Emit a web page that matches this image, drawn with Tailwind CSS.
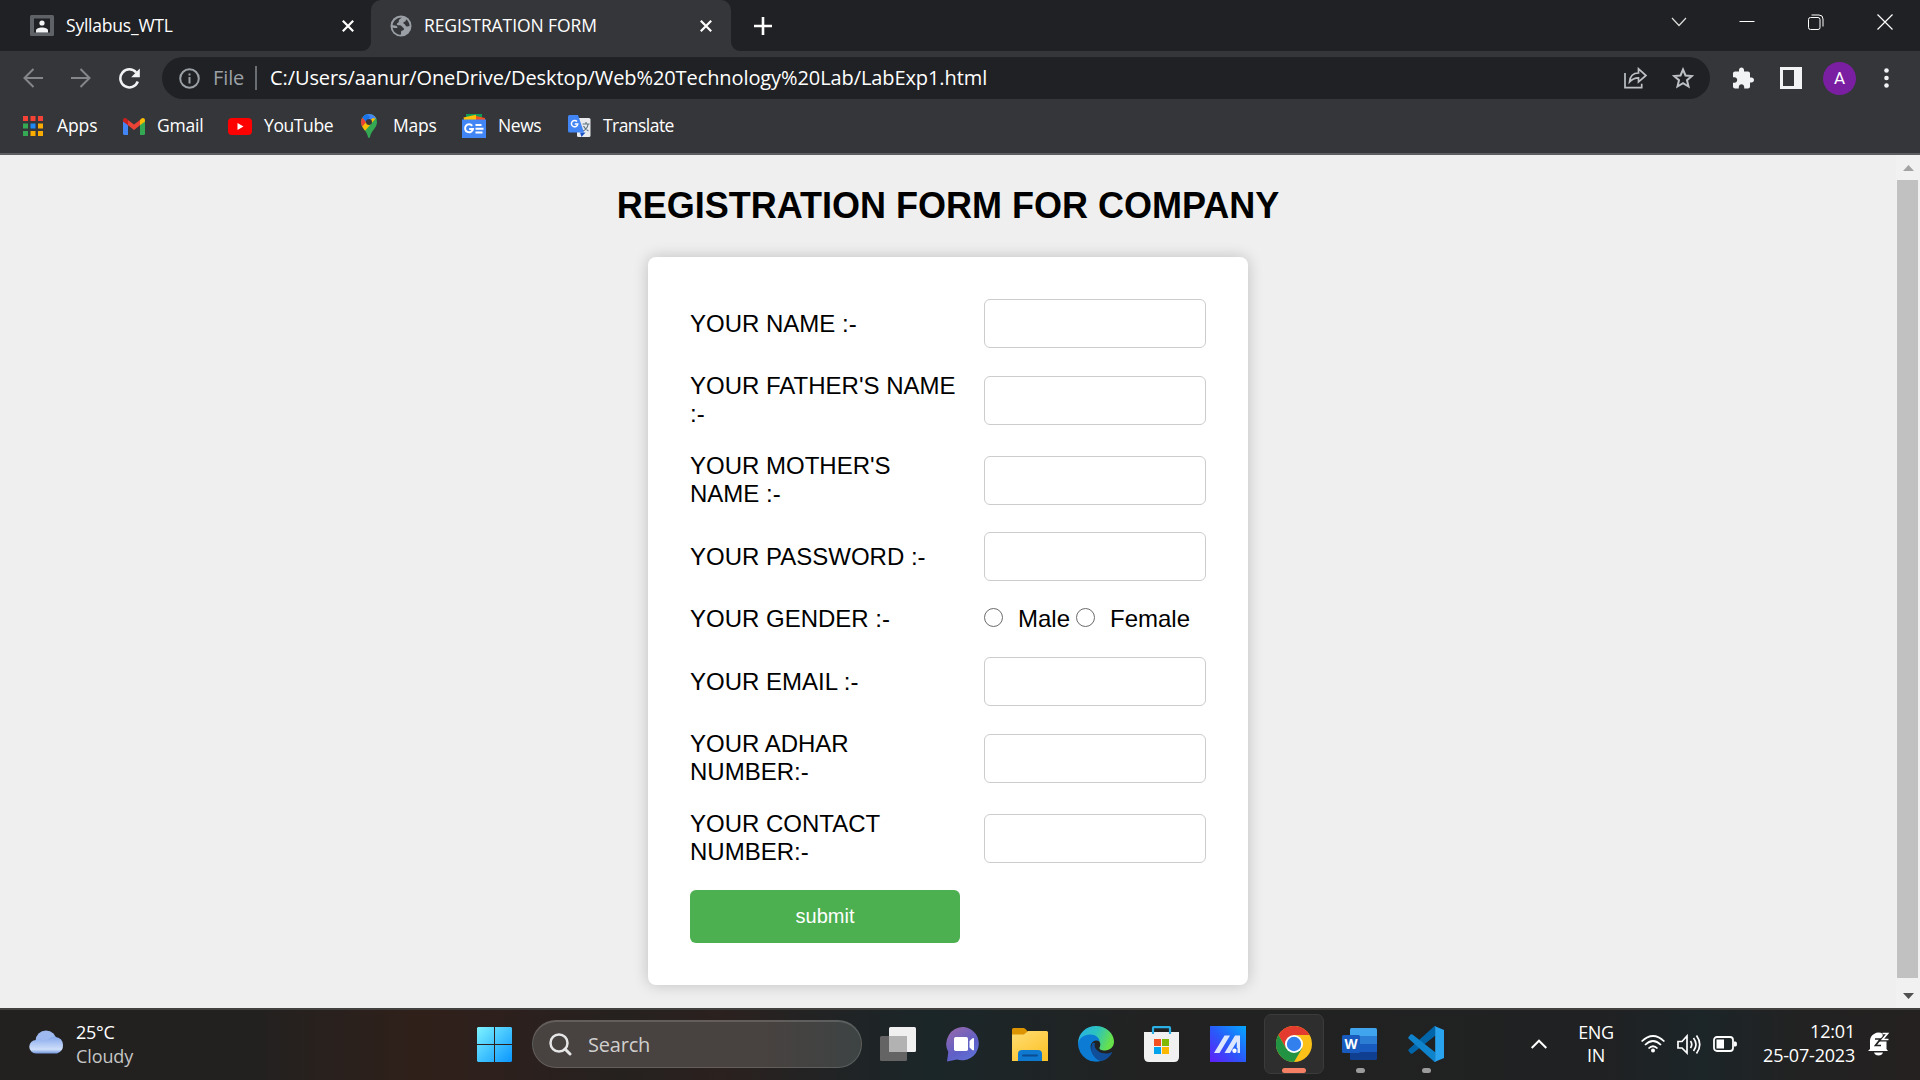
<!DOCTYPE html>
<html lang="en">
<head>
<meta charset="utf-8">
<title>REGISTRATION FORM</title>
<script src="https://cdn.jsdelivr.net/npm/@tailwindcss/browser@4"></script>
</head>
<body class="flex h-[1080px] w-[1920px] flex-col overflow-hidden bg-[#efefef] font-['Open_Sans',sans-serif] text-white">

<!-- Tab strip -->
<header class="flex h-[51px] shrink-0 bg-[#202124]">
  <div class="flex w-[371px] items-center bg-[#35363a]">
    <div class="flex h-full w-full items-center rounded-br-[9px] bg-[#202124] pl-[30px]">
      <svg class="h-[21px] w-6 shrink-0" viewBox="0 0 24 21"><rect width="24" height="21" rx="1.5" fill="#5f6368"/><rect x="4" y="3.5" width="16" height="14" fill="#202124"/><circle cx="12" cy="8" r="2.6" fill="#f1f3f4"/><path d="M6 17.5v-2c0-4 12-4 12 0v2z" fill="#f1f3f4"/></svg>
      <span class="mb-0.5 ml-3 w-[276px] text-[17.5px] leading-6 tracking-[-0.22px]">Syllabus_WTL</span>
      <svg class="h-3 w-3 shrink-0" viewBox="0 0 12 12" stroke="#fff" stroke-width="2.2"><path d="M.8.8l10.4 10.4M11.2.8L.8 11.2"/></svg>
    </div>
  </div>
  <div class="bg-[#202124]">
    <div class="flex h-full w-[360px] items-center rounded-t-[10px] bg-[#35363a] pl-[19px]">
      <svg class="h-[22px] w-[22px] shrink-0" viewBox="0 0 22 22"><circle cx="11" cy="11" r="10.5" fill="#9aa0a6"/><path d="M12 2.500C10 4 8.500 4.500 8.800 6.500c.2 1.500-1.800 1-2 2.500C6.500 11 11 9.500 12 11.500c.6 1.500 2 1 2 2.500s-3 1.500-3 3 .5 2.500-1 2.800C5.500 19 3 16 2.600 12.500c1.500.5 3 .8 4.400.5 1-.3.500-2-1-2.300-1.300-.3-2.800 0-3.400-.7C3 6 7 2.500 12 2.500zM16 4.200c2.300 1.600 3.600 4 3.600 6.800-1.300 0-2 .8-3.300.3-1.200-.5-.6-1.800-2-2.300-1.300-.5-1.300-2 .2-2.300 1-.2 1.500-1.200 1.500-2.500z" fill="#35363a"/></svg>
      <span class="mb-0.5 ml-3 w-[276px] text-[17.5px] leading-6 tracking-[-0.08px]">REGISTRATION FORM</span>
      <svg class="h-3 w-3 shrink-0" viewBox="0 0 12 12" stroke="#fff" stroke-width="2.2"><path d="M.8.8l10.4 10.4M11.2.8L.8 11.2"/></svg>
    </div>
  </div>
  <div class="flex flex-1 bg-[#35363a]">
    <div class="flex flex-1 items-center rounded-bl-[9px] bg-[#202124] pl-[23px]">
      <svg class="h-[18px] w-[18px]" viewBox="0 0 18 18" stroke="#fff" stroke-width="2.6"><path d="M9 0v18M0 9h18"/></svg>
      <svg class="mb-2 ml-[899px] h-4 w-4" viewBox="0 0 16 16" fill="none" stroke="#ddd" stroke-width="1.2"><path d="M1 4l7 7.500L15 4"/></svg>
      <svg class="mb-2 ml-[52px] h-4 w-4" viewBox="0 0 16 16" stroke="#fff"><path d="M.5 7.500h15"/></svg>
      <svg class="mb-2 ml-[53px] h-4 w-4" viewBox="0 0 16 16" fill="none" stroke="#fff"><rect x=".5" y="3.500" width="11.500" height="12" rx="2"/><path d="M3.500 1H11q4 0 4 4v7.500"/></svg>
      <svg class="mb-2 ml-[53px] h-4 w-4" viewBox="0 0 16 16" stroke="#fff" stroke-width="1.200"><path d="M.5.5l15 15M15.500.5l-15 15"/></svg>
    </div>
  </div>
</header>

<!-- Toolbar -->
<nav class="flex h-[54px] shrink-0 items-center bg-[#35363a] pl-[23px]">
  <svg class="h-5 w-5" viewBox="0 0 20 20" fill="none" stroke="#85868a" stroke-width="2"><path d="M20 10H1.500M10.500 1L1.500 10l9 9"/></svg>
  <svg class="ml-7 h-5 w-5" viewBox="0 0 20 20" fill="none" stroke="#85868a" stroke-width="2"><path d="M0 10h18.500M9.500 1l9 9-9 9"/></svg>
  <svg class="ml-7 h-[21px] w-[21px]" viewBox="0 0 21 21"><path d="M17.200 4.500A9 9 0 1 0 18.800 13.500" fill="none" stroke="#f1f3f4" stroke-width="2.500"/><path d="M20.800.6v8.600h-8.600z" fill="#f1f3f4"/></svg>
  <div class="ml-[22px] flex h-[42px] w-[1548px] items-center rounded-full bg-[#202124] pl-[17px]">
    <svg class="h-[21px] w-[21px]" viewBox="0 0 21 21" fill="none" stroke="#9aa0a6" stroke-width="2"><circle cx="10.500" cy="10.500" r="9.300"/><path d="M10.500 9v6.500M10.500 5.500V7.500"/></svg>
    <span class="ml-[13px] w-[42px] text-[20px] leading-6 tracking-[-0.1px] text-[#9aa0a6]">File</span>
    <span class="h-6 w-0.5 bg-[#6b6e72]"></span>
    <span class="ml-[13px] w-[1354px] text-[20px] leading-6 tracking-[-0.09px] whitespace-nowrap">C:/Users/aanur/OneDrive/Desktop/Web%20Technology%20Lab/LabExp1.html</span>
    <svg class="h-[22px] w-[23px]" viewBox="0 0 23 22" fill="none" stroke="#bdc1c6" stroke-width="1.700"><path d="M1 6v14.700h16.700v-4"/><path d="M5.500 15C6 9 9.500 6 14.500 6V1.800L22 8.500l-7.500 6.500v-4.200C10.500 10.800 8 12 5.500 15z"/></svg>
    <svg class="ml-[25px] h-[22px] w-[22px]" viewBox="0 0 22 22" fill="none" stroke="#bdc1c6" stroke-width="2"><path d="M11 2.500l2.500 6 6.400.5-4.900 4.200 1.500 6.300-5.500-3.400-5.500 3.400L7 13.200 2.100 9l6.400-.5z"/></svg>
  </div>
  <svg class="ml-[22px] h-[22px] w-[22px]" viewBox="1 0.500 22 22"><path fill="#f1f3f4" d="M20.500 11H19V7c0-1.100-.9-2-2-2h-4V3.500C13 2.120 11.880 1 10.500 1S8 2.120 8 3.500V5H4c-1.100 0-1.990.9-1.990 2v3.800H3.500c1.490 0 2.700 1.210 2.700 2.700s-1.210 2.700-2.700 2.700H2V20c0 1.100.9 2 2 2h3.800v-1.500c0-1.490 1.210-2.700 2.700-2.700s2.700 1.210 2.700 2.700V22H17c1.100 0 2-.9 2-2v-4h1.500c1.380 0 2.500-1.120 2.500-2.500S21.880 11 20.500 11z"/></svg>
  <svg class="ml-[26px] h-[22px] w-[22px]" viewBox="0 0 22 22"><path fill="#f1f3f4" fill-rule="evenodd" d="M0 0h22v22H0zM3 3v16h11V3z"/></svg>
  <span class="ml-[21px] flex h-[33px] w-[33px] items-center justify-center rounded-full bg-[#7b1fa2] font-[Roboto,sans-serif] text-[17px] leading-none">A</span>
  <svg class="ml-[28px] h-5 w-[5px]" viewBox="0 0 5 20" fill="#f1f3f4"><circle cx="2.500" cy="2.500" r="2.300"/><circle cx="2.500" cy="10" r="2.300"/><circle cx="2.500" cy="17.500" r="2.300"/></svg>
</nav>

<!-- Bookmarks -->
<nav class="flex h-[50px] shrink-0 items-center border-b-2 border-[#5d5e62] bg-[#35363a] pl-[23px] text-[17.5px] leading-6 tracking-[-0.4px]">
  <div class="mb-1.5 flex items-center">
    <svg class="h-5 w-5" viewBox="0 0 20 20"><path d="M0 0h5v5H0zM7.500 0h5v5h-5zM15 0h5v5h-5z" fill="#f44336"/><path d="M0 7.500h5v5H0zM0 15h5v5H0z" fill="#34a853"/><path d="M7.500 7.500h5v5h-5z" fill="#1e88f5"/><path d="M15 7.500h5v5h-5zM7.500 15h5v5h-5zM15 15h5v5h-5z" fill="#f9ab00"/></svg>
    <span class="mb-0.5 ml-3.5 w-[66px] tracking-[-0.1px]">Apps</span>
    <svg class="h-[17px] w-[22px]" viewBox="0 0 22 17"><path d="M0 3v12.500Q0 17 1.500 17H5V6.500z" fill="#4285f4"/><path d="M17 6.500V17h3.500q1.500 0 1.500-1.500V3z" fill="#34a853"/><path d="M17 2v5.200l5-3.700V2.500C22 0 19.500-.6 18 1z" fill="#fbbc04"/><path d="M5 7.200V2l6 4.500L17 2v5.200L11 12z" fill="#ea4335"/><path d="M0 2.500v1l5 3.700V2L4 1C2.500-.6 0 0 0 2.500z" fill="#c5221f"/></svg>
    <span class="mb-0.5 ml-3 w-[71px] tracking-[-0.2px]">Gmail</span>
    <svg class="h-[17px] w-6" viewBox="0 0 24 17"><rect width="24" height="17" rx="4" fill="#f00"/><path d="M9.500 5v7l6-3.500z" fill="#fff"/></svg>
    <span class="mb-0.5 ml-3 w-[97px]">YouTube</span>
    <svg class="h-6 w-4" viewBox="0 0 16 24"><clipPath id="pin"><path d="M8 0a8 8 0 0 1 8 8c0 6-5.500 8-7 15q-1 2-2 0C5.500 16 0 14 0 8a8 8 0 0 1 8-8z"/></clipPath><g clip-path="url(#pin)"><path d="M0 0h16v24H0z" fill="#34a853"/><path d="M0 12L13 1l2 3L3 18 0 16z" fill="#fbbc04"/><path d="M0 3l6 4-6 7z" fill="#ea4335"/><path d="M3 0h13v5l-4-1-6 4-5-5z" fill="#4285f4"/><path d="M1 2.500L4 0h2l3 3-4 5z" fill="#1a73e8"/></g><circle cx="8" cy="8" r="3" fill="#35363a"/></svg>
    <span class="mb-0.5 ml-4 w-[69px] tracking-[-0.2px]">Maps</span>
    <svg class="h-6 w-6" viewBox="0 0 24 24"><path d="M4 0h16v6H4z" fill="#0f9d58"/><path d="M1.500 3.500L14 .8V6H2z" fill="#ffc107"/><path d="M14 2l9 2v3h-9z" fill="#f4511e"/><path d="M0 5.500h24V24H0z" fill="#4285f4"/><path d="M10.200 11.800A4 4 0 1 0 11 15H7.200M13.500 11h6M13.500 14.800h8M13.500 18.500h7" stroke="#fff" stroke-width="2" fill="none"/></svg>
    <span class="mb-0.5 ml-3 w-[70px]">News</span>
    <svg class="h-6 w-[23px]" viewBox="0 0 23 24"><rect x="9" y="4" width="13.500" height="19" rx="1.500" fill="#e8eaed"/><path d="M14.500 10h7M18 8v2M20 10.500c-.5 3-2 5-5 6.500M15.500 12c1 2 3 4 5 5" stroke="#5f7482" stroke-width="1.200" fill="none"/><path d="M12 18.500h5.500L13.500 23z" fill="#1a4fc4"/><path d="M1.500 1H10l6 17.500H1.500Q0 18.500 0 17V2.500Q0 1 1.500 1z" fill="#4285f4"/><path d="M9 7.500A3.200 3.200 0 1 0 9.800 10H6.800" stroke="#fff" stroke-width="1.500" fill="none"/></svg>
    <span class="mb-0.5 ml-3 tracking-[-0.55px]">Translate</span>
  </div>
</nav>

<!-- Page -->
<div class="flex h-[853px] shrink-0 font-['Liberation_Sans',Arial,sans-serif] text-black">
  <main class="flex w-[1896px] flex-col items-center pt-[30px]">
    <h1 class="text-[36px] leading-[41px] font-bold whitespace-nowrap">REGISTRATION FORM FOR COMPANY</h1>
    <form class="mt-[31px] grid h-[728px] w-[600px] grid-cols-[294px_222px] grid-rows-[73px_80px_80px_73px_52px_73px_80px_80px_77px] items-center rounded-[8px] bg-white px-[42px] py-[30px] text-[24px] leading-7 shadow-[0_0_15px_rgba(0,0,0,0.2)]">
      <label class="w-[270px]">YOUR NAME :-</label><input class="h-[49px] w-full rounded-[6px] border border-[#ccc]">
      <label class="w-[270px]">YOUR FATHER'S NAME :-</label><input class="h-[49px] w-full rounded-[6px] border border-[#ccc]">
      <label class="w-[270px]">YOUR MOTHER'S NAME :-</label><input class="h-[49px] w-full rounded-[6px] border border-[#ccc]">
      <label class="w-[270px]">YOUR PASSWORD :-</label><input type="password" class="h-[49px] w-full rounded-[6px] border border-[#ccc]">
      <label class="w-[270px]">YOUR GENDER :-</label>
      <div class="flex items-center whitespace-nowrap">
        <input type="radio" class="mb-1 h-[19px] w-[19px] shrink-0 appearance-none rounded-full border-[1.5px] border-[#6b6b6b]">
        <span class="ml-[15px] w-[58px]">Male</span>
        <input type="radio" class="mb-1 h-[19px] w-[19px] shrink-0 appearance-none rounded-full border-[1.5px] border-[#6b6b6b]">
        <span class="ml-[15px]">Female</span>
      </div>
      <label class="w-[270px]">YOUR EMAIL :-</label><input class="h-[49px] w-full rounded-[6px] border border-[#ccc]">
      <label class="w-[270px]">YOUR ADHAR NUMBER:-</label><input class="h-[49px] w-full rounded-[6px] border border-[#ccc]">
      <label class="w-[270px]">YOUR CONTACT NUMBER:-</label><input class="h-[49px] w-full rounded-[6px] border border-[#ccc]">
      <button type="button" class="h-[53px] w-[270px] rounded-[6px] bg-[#4caf50] pb-0.5 text-[20px] text-white">submit</button>
    </form>
  </main>
  <aside class="flex w-6 flex-col items-center bg-[#f1f1f1] pt-2.5">
    <svg class="h-1.5 w-[11px]" viewBox="0 0 11 6"><path d="M0 6L5.500 0 11 6z" fill="#a3a3a3"/></svg>
    <div class="mt-[9px] mr-px h-[798px] w-[21px] bg-[#c1c1c1]"></div>
    <svg class="mt-[15px] h-1.5 w-[11px]" viewBox="0 0 11 6"><path d="M0 0h11L5.500 6z" fill="#505050"/></svg>
  </aside>
</div>

<!-- Taskbar -->
<footer class="flex h-[72px] shrink-0 items-center border-t-2 border-[#424140] bg-[linear-gradient(90deg,#222120_0,#232120_260px,#30201a_420px,#2d201d_500px,#25211f_620px,#2b211f_720px,#212324_830px,#1b2629_930px,#1f2425_1060px,#222_1150px,#202122_1600px,#1c2528_1700px,#222_1800px,#242120_1920px)] pl-[29px]">
  <svg class="mb-1.5 h-6 w-9" viewBox="0 0 36 24"><defs><linearGradient id="cl" x2="0" y2="1"><stop stop-color="#86a9ec"/><stop offset=".75" stop-color="#cfdffa"/><stop offset="1" stop-color="#7197dd"/></linearGradient></defs><circle cx="17" cy="11" r="10.500" fill="#9db9ef"/><path d="M7 23.500A6.500 6.500 0 0 1 7 10q5-2 9 2 5-6 11-5a8.500 8.500 0 0 1 1 16.500z" fill="url(#cl)"/></svg>
  <div class="mb-[3px] ml-[11px] flex w-[401px] flex-col text-[18px] leading-6 tracking-[-0.3px]"><span>25°C</span><span class="tracking-[-0.1px] text-[#c6c6c6]">Cloudy</span></div>
  <svg class="mb-px h-[35px] w-[35px]" viewBox="0 0 35 35"><defs><linearGradient id="win" gradientUnits="userSpaceOnUse" x1="0" y1="0" x2="35" y2="35"><stop stop-color="#7df3ff"/><stop offset="1" stop-color="#0a96ff"/></linearGradient></defs><path d="M1 0h16v17H0V1zM18 0h16l1 1v16H18zM0 18h17v17H1l-1-1zM18 18h17v16l-1 1H18z" fill="url(#win)"/></svg>
  <div class="mb-0.5 ml-5 flex h-12 w-[330px] items-center rounded-full border border-t-2 border-white/15 bg-[#484240] bg-linear-to-r from-[#484240] from-70% to-[#3d4343] pl-[16px]">
    <svg class="h-[23px] w-[23px]" viewBox="0 0 23 23" fill="none" stroke="#e6e6e6" stroke-width="2.500"><circle cx="10" cy="10" r="8.500"/><path d="M16 16l5 5" stroke-width="3" stroke-linecap="round"/></svg>
    <span class="ml-4 text-[20px] leading-6 tracking-[-0.2px] text-[#d0cfce]">Search</span>
  </div>
  <svg class="mb-[3px] ml-[18px] h-[34px] w-9" viewBox="0 0 36 34"><rect x="9" width="27" height="25" rx="1.500" fill="#f0f0f0"/><rect y="9" width="27" height="25" rx="1.500" fill="#646464"/><path d="M9 9h18v16H9z" fill="#b2b2b2"/></svg>
  <svg class="mb-0.5 ml-[30px] h-[35px] w-[35px]" viewBox="0 0 34 35"><defs><linearGradient id="ch" x1=".2" x2=".8" y2="1"><stop stop-color="#9468ac"/><stop offset=".6" stop-color="#5f5fc7"/><stop offset="1" stop-color="#6174d8"/></linearGradient></defs><path d="M17.500 0a16.700 16.700 0 1 1-7 32.500L.5 34.500 1.800 25A17 17 0 0 1 17.500 0z" fill="url(#ch)"/><rect x="7.500" y="10" width="14" height="14" rx="1.800" fill="#fff"/><path d="M23 14l3-2.800h1.500v12H26L23 20.500z" fill="#fff"/></svg>
  <svg class="mb-0.5 ml-[31px] h-[33px] w-9" viewBox="0 0 36 33"><defs><linearGradient id="fo" x2=".7" y2="1"><stop stop-color="#ffdd73"/><stop offset="1" stop-color="#fcc32b"/></linearGradient></defs><path d="M0 1.500Q0 0 1.500 0h10q1.500 0 2.500 1.500L16 4v5H0z" fill="#dc9500"/><path d="M0 6.500h12l4-3.500h18.500Q36 3 36 4.500V33H0z" fill="url(#fo)"/><path d="M6 33v-7q0-4 4-4h16q4 0 4 4v7z" fill="#0f78cf"/><path d="M11 27.500h14" stroke="#0b4c93" stroke-width="1.800" stroke-linecap="round"/></svg>
  <svg class="mb-0.5 ml-[30px] h-9 w-9" viewBox="0 0 36 36"><defs><linearGradient id="ed" x2="1" y2=".3"><stop stop-color="#28afea"/><stop offset=".55" stop-color="#2cc3bd"/><stop offset="1" stop-color="#67e14b"/></linearGradient></defs><path d="M0 18C0 7 8 0 18 0s18 7.500 18 15.500C36 21 32 24.500 27 24.500c-4 0-6-1-5.500-3 2-3 .5-7.500-4-8.500C10 11.500 3 14 0 18z" fill="url(#ed)"/><path d="M0 18C1 12 6 8.500 12 8.500c6 0 9.500 3.500 9.500 6.500-6-2.500-11 3-8 10 2 5 7 9 12 9A18 18 0 0 1 0 18z" fill="#0c7bd4"/><path d="M14.500 17c-3.500 7 0 15 8 18 5 0 9-4 11.500-8 .3-1-.5-1-1-.5-3 1.500-9 1.500-13-1.500-3-2-4-5-3-8z" fill="#114e99"/></svg>
  <svg class="mb-0.5 ml-[30px] h-9 w-[35px]" viewBox="0 0 35 36"><path d="M0 6h35v25q0 5-5 5H5q-5 0-5-5z" fill="#f1f1f1"/><path d="M9 8V2q0-.8.800-.8h15.400q.8 0 .8.800v6" fill="none" stroke="#2bb0e5" stroke-width="2.200"/><path d="M10 13h7v7h-7z" fill="#f35022"/><path d="M18 13h7v7h-7z" fill="#80b900"/><path d="M10 21h7v7h-7z" fill="#01a3ed"/><path d="M18 21h7v7h-7z" fill="#ffb800"/></svg>
  <svg class="mb-0.5 ml-[31px] h-9 w-9" viewBox="0 0 36 36"><defs><linearGradient id="as" x1="0" y1="1" x2="1" y2="0"><stop stop-color="#611ef8"/><stop offset=".5" stop-color="#285bfa"/><stop offset="1" stop-color="#05a8ff"/></linearGradient></defs><path d="M0 0h36v36H0z" fill="url(#as)"/><path d="M14.500 9.500H20L9.500 27H4zM25 9.500h5V22h-3.200v-6.500L20 27h-5.500z" fill="#dce6ff"/><circle cx="24.500" cy="24.800" r="2.200" fill="#fff"/><path d="M27.500 22H30v5h-2.500z" fill="#dce6ff"/></svg>
  <div class="relative mb-0.5 ml-[18px] flex h-[60px] w-[60px] items-center justify-center rounded-[7px] border border-[#3b3b3b] bg-[#2e2e2e]">
    <svg class="h-9 w-9" viewBox="0 0 36 36"><circle cx="18" cy="18" r="18" fill="#fbc118"/><path d="M2.400 9A18 18 0 0 1 33.600 9H18l-7.800 13.500z" fill="#e33b2e"/><path d="M2.400 9A18 18 0 0 0 18 36l8-13.500H10.200z" fill="#229342"/><circle cx="18" cy="18" r="9" fill="#fff"/><circle cx="18" cy="18" r="7.200" fill="#3180ee"/></svg>
    <span class="absolute bottom-0 h-[5px] w-6 rounded-full bg-[#f58063]"></span>
  </div>
  <div class="relative mb-0.5 ml-[18px]">
    <svg class="h-8 w-[35px]" viewBox="0 0 35 32"><path d="M8 1.500Q8 0 9.500 0h24Q35 0 35 1.500V8H8z" fill="#41a5ee"/><path d="M8 8h27v8H8z" fill="#2b7cd3"/><path d="M8 16h27v8H8z" fill="#185abd"/><path d="M8 24h27v6.500q0 1.500-1.500 1.500h-24Q8 32 8 30.500z" fill="#103f91"/><rect y="7" width="18" height="18" rx="1.500" fill="#185abd"/><text x="9" y="21" text-anchor="middle" font-family="Open Sans" font-weight="700" font-size="13.500" fill="#fff">W</text></svg>
    <span class="absolute -bottom-[13px] left-[14px] h-[5px] w-[9px] rounded-full bg-[#9b9b9b]"></span>
  </div>
  <div class="relative mb-0.5 ml-[31px]">
    <svg class="h-9 w-9" viewBox="0 0 36 36"><path d="M1 25.500q-1.500-1 0-2.500L26 .5q1-1 1.500 0V9.500L4.500 27.500q-1 .5-2 0z" fill="#0065a9"/><path d="M1 10.500q-1.500 1 0 2.500L26 35.500q1 1 1.500 0V26.500L4.500 8.500q-1-.5-2 0z" fill="#0f83cc"/><path d="M26.500 0L36 4v28l-9.500 4q.7-.7.7-2V2q0-1.300-.7-2z" fill="#2aa3ee"/></svg>
    <span class="absolute -bottom-[11px] left-[14px] h-[5px] w-[9px] rounded-full bg-[#9b9b9b]"></span>
  </div>
  <svg class="mb-0.5 ml-[87px] h-2.5 w-4" viewBox="0 0 16 10" fill="none" stroke="#fff" stroke-width="2"><path d="M.7 9L8 1.700 15.300 9"/></svg>
  <div class="mb-0.5 ml-[31px] flex w-9 flex-col items-center text-[18px] leading-[23px] tracking-[-0.4px]"><span>ENG</span><span>IN</span></div>
  <svg class="mb-0.5 ml-[27px] h-[18px] w-6" viewBox="0 0 24 18" fill="none" stroke="#fff" stroke-width="1.700"><path d="M.6 6.500q11.400-11 22.800 0M4 10q8-8 16 0M7.500 13.500q4.500-4.500 9 0"/><circle cx="12" cy="15.500" r="2" fill="#fff" stroke="none"/></svg>
  <svg class="mb-0.5 ml-3 h-[21px] w-6" viewBox="0 0 24 21" fill="none" stroke="#fff" stroke-width="1.700"><path d="M1 7.500h4L10 2v17l-5-5H1zM13.500 7q2.500 3.500 0 7M16.500 4q5 6.500 0 13M19.500 1.500q6.500 9 0 18"/></svg>
  <svg class="mb-0.5 ml-3 h-4 w-6" viewBox="0 0 24 16"><rect x="1" y="1" width="19" height="14" rx="3" fill="none" stroke="#fff" stroke-width="1.800"/><rect x="3.500" y="3.500" width="7.500" height="9" fill="#fff"/><path d="M21 5.500h1.500q1.500 0 1.500 2.500t-1.500 2.500H21z" fill="#fff"/></svg>
  <div class="mb-[5px] ml-[18px] flex w-[100px] flex-col items-end text-[18px] leading-6 tracking-[-0.2px] whitespace-nowrap"><span>12:01</span><span>25-07-2023</span></div>
  <svg class="mb-0.5 ml-[13px] h-6 w-[22px]" viewBox="0 0 22 24"><path d="M2 17v-7a8.500 8.500 0 0 1 13-8v6h3.500v9l1.500 2H0z" fill="#fff"/><path d="M6 20.500h9q-1 3-4.500 3T6 20.500z" fill="#fff"/><path d="M7 7h5.500l-5 6.500H13" fill="none" stroke="#222" stroke-width="1.700"/><path d="M14.500 1.500h5l-5 6h6" fill="none" stroke="#222" stroke-width="4"/><path d="M14.500 1.500h5l-5 6h6" fill="none" stroke="#fff" stroke-width="1.700"/></svg>
</footer>
</body>
</html>
